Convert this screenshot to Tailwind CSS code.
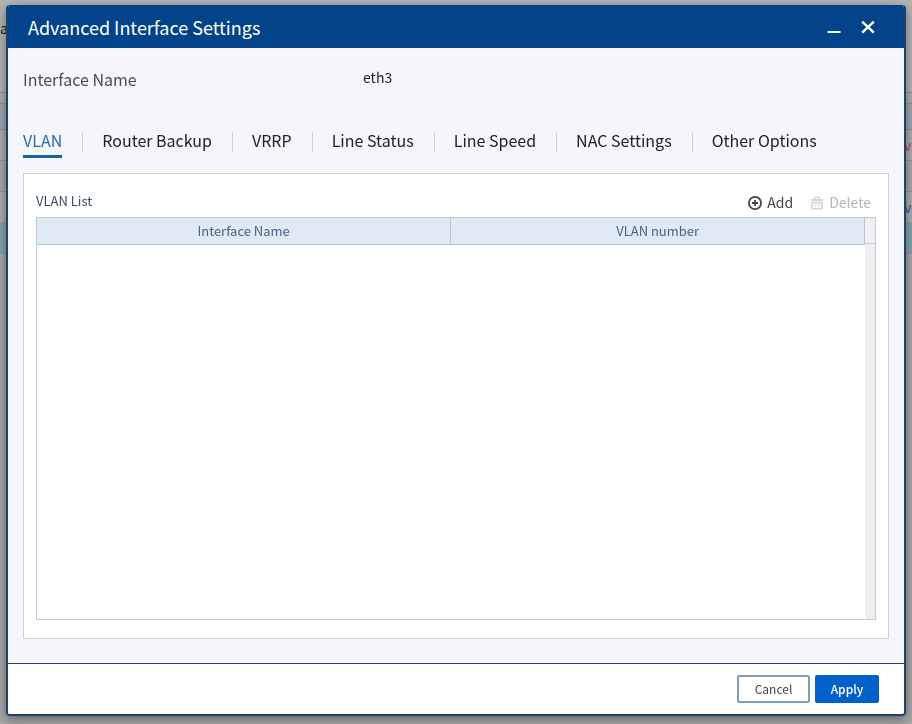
<!DOCTYPE html>
<html lang="en">
  <head>
    <meta charset="UTF-8" />
    <meta name="viewport" content="width=device-width, initial-scale=1.0" />
    <title>Advanced Interface Settings</title>
    <script src="https://cdn.jsdelivr.net/npm/@tailwindcss/browser@4"></script>
  </head>
  <body class="min-h-screen overflow-hidden bg-[#a9a9ac] font-['Noto_Sans_CJK_KR','Open_Sans',sans-serif] text-[#222]">
    <!-- Dimmed page behind the dialog -->
    <div class="text-sm leading-5" aria-hidden="true">
      <div class="h-[93px] border-b border-[#929298] bg-[#b6b5b9] pt-[18px]">a</div>
      <div class="h-[11px] border-b border-[#92969c] bg-[#b0b0b3]"></div>
      <div class="h-[26px] border-b border-[#8f9399] bg-[#a1a9b6]"></div>
      <div class="flex h-[31px] items-center justify-end border-b border-[#98989c] bg-[#aeaeb1] text-[#c2454c]"><span class="w-2">vo</span></div>
      <div class="h-[31px] border-b border-[#98989c] bg-[#a9a9ac]"></div>
      <div class="flex h-[31px] items-center justify-end border-b border-[#98989c] bg-[#aeaeb1] text-[#2f62a5]"><span class="w-2">vo</span></div>
      <div class="h-[31px] border-b border-[#98989c] bg-[#86a5ad]"></div>
    </div>

    <!-- Dialog -->
    <div class="fixed inset-0 flex px-1.5 pt-[5px] pb-2">
      <section role="dialog" aria-labelledby="dialog-title" class="flex flex-1 flex-col overflow-hidden rounded-[4px] border-2 border-t-0 border-[#1d4468] bg-[#f5f6fb] shadow-[0_3px_12px_rgba(0,0,0,0.45)]">
        <header class="flex h-[43px] shrink-0 items-center justify-between bg-[#03438a] pr-[26px] pl-5 text-white">
          <h1 id="dialog-title" class="text-[18px] leading-6">Advanced Interface Settings</h1>
          <div class="flex gap-[14px]">
            <button type="button" aria-label="Minimize" class="h-5 w-5">
              <svg class="h-5 w-5" viewBox="0 0 20 20"><path d="M3.5 15h13" stroke="currentColor" stroke-width="2" fill="none" /></svg>
            </button>
            <button type="button" aria-label="Close" class="h-5 w-5">
              <svg class="h-5 w-5" viewBox="0 0 20 20"><path d="M4.2 4.7l11.6 11M15.8 4.7l-11.6 11" stroke="currentColor" stroke-width="2.4" fill="none" /></svg>
            </button>
          </div>
        </header>

        <div class="flex flex-1 flex-col px-[15px] pb-6">
          <dl class="flex pt-[19px] leading-6">
            <dt class="w-[340px] text-base text-[#4a4d57]">Interface Name</dt>
            <dd class="text-sm leading-5">eth3</dd>
          </dl>

          <nav class="mt-[37px] flex h-[30px] text-base leading-6">
            <a href="#" class="mr-5 border-b-3 border-[#17639f] text-[#2a6ca8]">VLAN</a>
            <a href="#" class="flex before:mt-1 before:mr-[19px] before:h-5 before:border-l before:border-[#cdd0d6]">Router Backup</a>
            <a href="#" class="ml-5 flex before:mt-1 before:mr-[19px] before:h-5 before:border-l before:border-[#cdd0d6]">VRRP</a>
            <a href="#" class="ml-5 flex before:mt-1 before:mr-[19px] before:h-5 before:border-l before:border-[#cdd0d6]">Line Status</a>
            <a href="#" class="ml-5 flex before:mt-1 before:mr-[19px] before:h-5 before:border-l before:border-[#cdd0d6]">Line Speed</a>
            <a href="#" class="ml-5 flex before:mt-1 before:mr-[19px] before:h-5 before:border-l before:border-[#cdd0d6]">NAC Settings</a>
            <a href="#" class="ml-5 flex before:mt-1 before:mr-[19px] before:h-5 before:border-l before:border-[#cdd0d6]">Other Options</a>
          </nav>

          <div class="mt-[15px] flex flex-1 flex-col border border-[#ccd2dc] bg-white px-3 pt-4 pb-[18px]">
            <div class="flex h-[27px] items-start justify-between">
              <h2 class="text-[13px] leading-[22px] text-[#3a4a68]">VLAN List</h2>
              <div class="flex gap-4 pr-[5px] text-sm leading-6">
                <button type="button" class="flex items-center gap-1 text-[#45474f]">
                  <svg class="mt-0.5 h-4 w-4" viewBox="0 0 16 16" fill="none" stroke="currentColor" stroke-width="1.8">
                    <circle cx="8" cy="8" r="6.1" />
                    <path d="M8 5v6M5 8h6" />
                  </svg>
                  Add
                </button>
                <button type="button" disabled class="flex items-center gap-1 text-[#b4b4b8]">
                  <svg class="mt-0.5 h-4 w-4" viewBox="0 0 16 16" fill="none" stroke="#d5d5d8" stroke-width="1.6">
                    <path d="M2 5h12" stroke-width="2" />
                    <path d="M6 4.5V2.3h4v2.2" />
                    <path d="M3 7.6h10v6H3z" />
                    <path d="M6.3 9.4v1.8M9.7 9.4v1.8" />
                  </svg>
                  Delete
                </button>
              </div>
            </div>

            <div class="flex flex-1 border border-[#c3c9d2]">
              <div class="flex-1">
                <table class="w-full table-fixed border-collapse text-[13px] leading-5">
                  <thead>
                    <tr class="h-[26px] border-b border-[#b9c4d2] bg-[#e0eaf6] text-[#4a6482]">
                      <th class="border-r border-[#b9c4d2] p-0 font-normal">Interface Name</th>
                      <th class="border-r border-[#b9c4d2] p-0 font-normal">VLAN number</th>
                    </tr>
                  </thead>
                  <tbody></tbody>
                </table>
              </div>
              <div class="w-[10px] bg-[#f0f0f2]">
                <div class="h-[26px] border-b border-[#c9cdd4]"></div>
              </div>
            </div>
          </div>
        </div>

        <footer class="flex h-[51px] shrink-0 items-center justify-end gap-[5px] border-t border-[#1d4468] bg-white pr-[25px] text-xs leading-5">
          <button type="button" class="h-7 w-[73px] rounded-[2px] border-2 border-[#7f9db5] bg-white text-[#44464c]">Cancel</button>
          <button type="button" class="h-7 w-16 rounded-[2px] bg-[#0260cb] font-medium text-white">Apply</button>
        </footer>
      </section>
    </div>
  </body>
</html>
